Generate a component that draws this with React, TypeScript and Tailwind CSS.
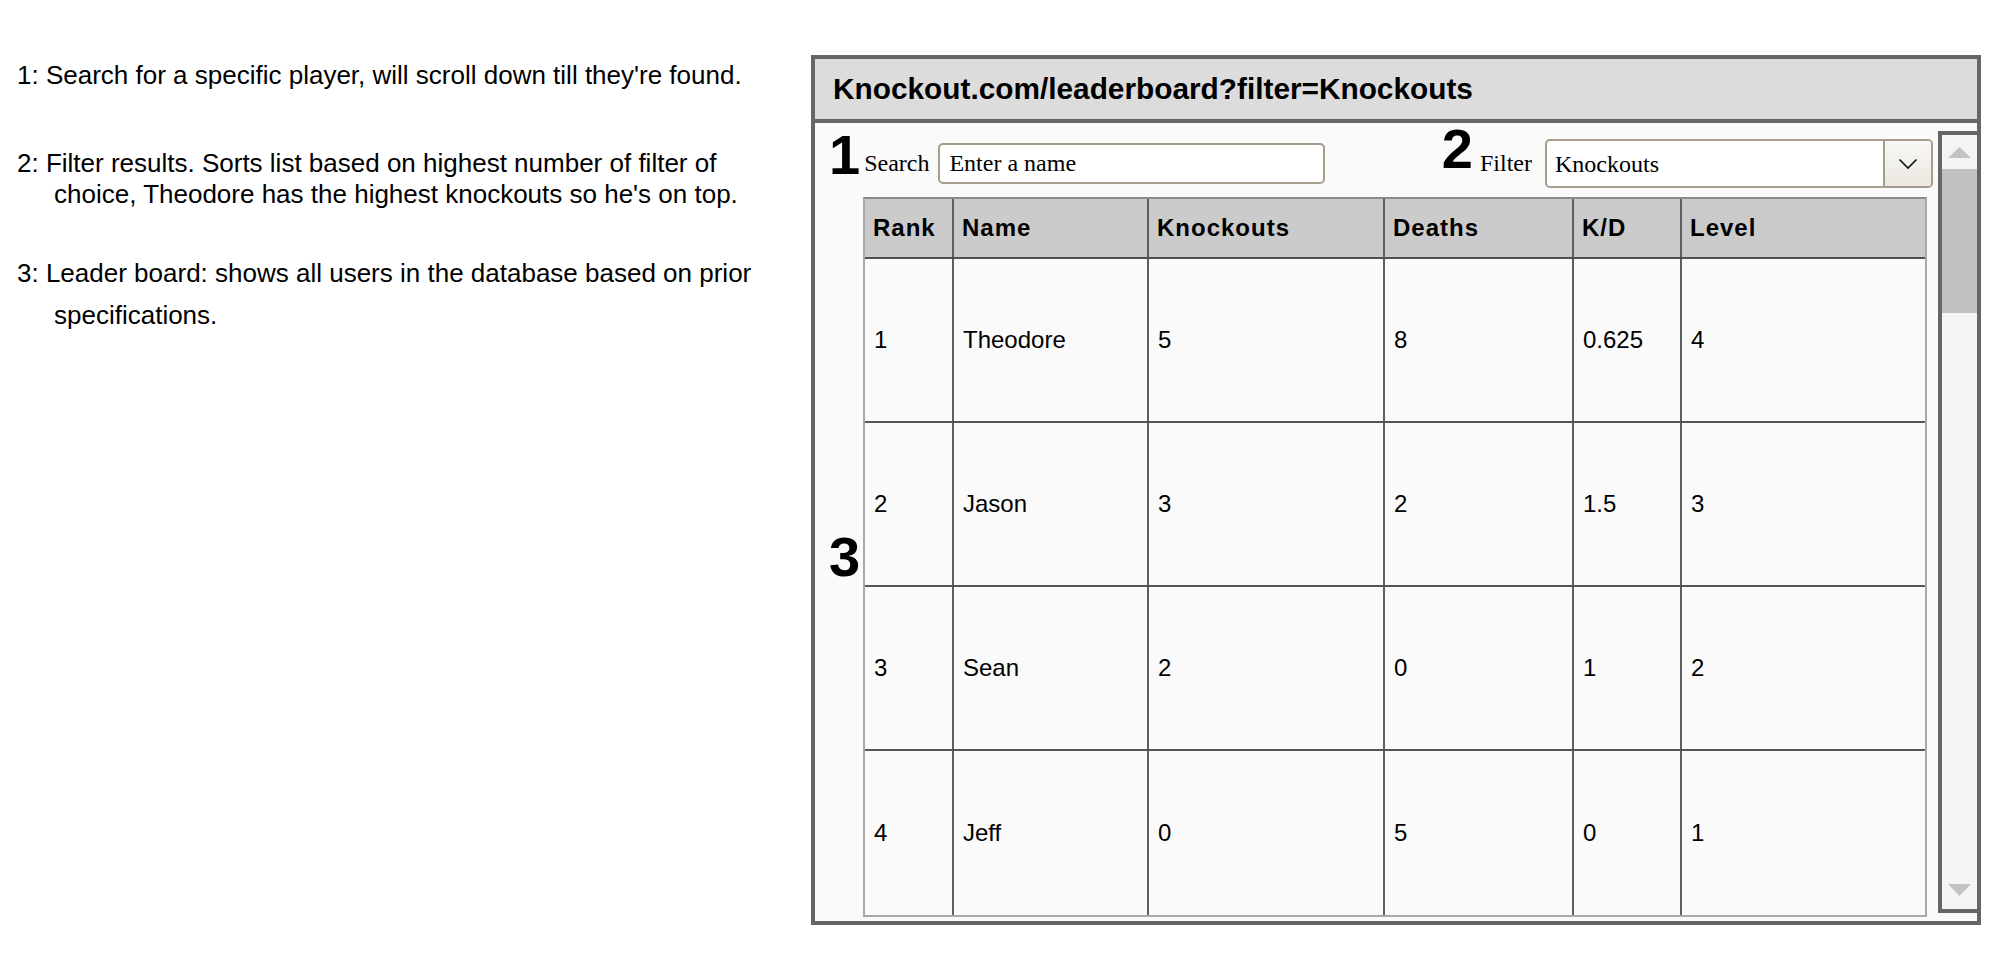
interface Player {
  rank: number;
  name: string;
  knockouts: number;
  deaths: number;
  kd: string;
  level: number;
}

const players: Player[] = [
  { rank: 1, name: 'Theodore', knockouts: 5, deaths: 8, kd: '0.625', level: 4 },
  { rank: 2, name: 'Jason', knockouts: 3, deaths: 2, kd: '1.5', level: 3 },
  { rank: 3, name: 'Sean', knockouts: 2, deaths: 0, kd: '1', level: 2 },
  { rank: 4, name: 'Jeff', knockouts: 0, deaths: 5, kd: '0', level: 1 },
];

const columns = ['Rank', 'Name', 'Knockouts', 'Deaths', 'K/D', 'Level'];
const widths = ['w-[87px]', 'w-[195px]', 'w-[236px]', 'w-[189px]', 'w-[108px]', 'w-[245px]'];

function Notes() {
  return (
    <div className="w-[811px] shrink-0 pl-[17px] pt-[60px] text-[26px] text-black font-['Liberation_Sans',Arial,sans-serif]">
      <p className="leading-[30px]">1: Search for a specific player, will scroll down till they're found.</p>
      <div className="mt-[58px] leading-[31px]">
        <p>2: Filter results. Sorts list based on highest number of filter of</p>
        <p className="pl-[37px]">choice, Theodore has the highest knockouts so he's on top.</p>
      </div>
      <div className="mt-[42px] leading-[42px]">
        <p>3: Leader board: shows all users in the database based on prior</p>
        <p className="pl-[37px]">specifications.</p>
      </div>
    </div>
  );
}

function Scrollbar() {
  return (
    <div className="w-[39px] shrink-0 mt-[8px] mb-[8px] border-l-4 border-t-4 border-b-4 border-[#666] bg-[#f4f4f4] flex flex-col">
      <div className="h-[34px] flex items-center justify-center">
        <svg width="23" height="11" viewBox="0 0 23 11">
          <polygon points="11.5,0 23,11 0,11" fill="#c3c3c3" />
        </svg>
      </div>
      <div className="h-[144px] bg-[#c1c1c1]" />
      <div className="flex-1" />
      <div className="h-[28px] flex items-start justify-center pt-[3px]">
        <svg width="23" height="12" viewBox="0 0 23 12">
          <polygon points="0,0 23,0 11.5,12" fill="#c3c3c3" />
        </svg>
      </div>
    </div>
  );
}

function Leaderboard() {
  return (
    <div className="w-[1064px] border-2 border-[#a8a8a8] border-t-[#8a8a8a] bg-[#fafafa] font-['Liberation_Sans',Arial,sans-serif] text-black">
      <div className="flex h-[60px] bg-[#cbcbcb] border-b-2 border-[#4f4f4f]">
        {columns.map((c, i) => (
          <div
            key={c}
            className={`${widths[i]} shrink-0 flex items-center pl-[8px] text-[24px] font-bold tracking-[1px] ${i > 0 ? 'border-l-2 border-[#5f5f5f]' : ''}`}
          >
            {c}
          </div>
        ))}
      </div>
      {players.map((p, r) => {
        const cells = [p.rank, p.name, p.knockouts, p.deaths, p.kd, p.level];
        return (
          <div key={p.rank} className={`flex h-[164px] ${r < players.length - 1 ? 'border-b-2 border-[#555]' : ''}`}>
            {cells.map((v, i) => (
              <div
                key={i}
                className={`${widths[i]} shrink-0 flex items-center pl-[9px] text-[24px] ${i > 0 ? 'border-l-2 border-[#5f5f5f]' : ''}`}
              >
                {v}
              </div>
            ))}
          </div>
        );
      })}
    </div>
  );
}

export default function App() {
  return (
    <div className="w-[2002px] h-[976px] bg-white flex">
      <Notes />
      <div className="mt-[55px] w-[1170px] h-[870px] border-4 border-[#666] bg-[#fafafa] flex flex-col">
        <div className="h-[64px] shrink-0 bg-[#dcdcdc] border-b-4 border-[#666] flex items-center pl-[18px]">
          <span className="text-[29.8px] font-bold text-black font-['Liberation_Sans',Arial,sans-serif]">
            Knockout.com/leaderboard?filter=Knockouts
          </span>
        </div>
        <div className="flex flex-1 min-h-0">
          <div className="flex-1 flex flex-col">
            <div className="h-[74px] shrink-0 flex items-start justify-between pl-[14px] pr-[5px] font-['Liberation_Serif','Times_New_Roman',serif] text-black">
              <div className="flex items-start">
                <span className="mt-[4px] text-[56px] leading-none font-bold font-['Liberation_Sans',Arial,sans-serif]">1</span>
                <span className="mt-[28px] ml-[4px] text-[24px] leading-none">Search</span>
                <input
                  className="mt-[20px] ml-[9px] w-[387px] h-[41px] px-[9px] rounded-[5px] border-2 border-[#a69d8d] bg-white text-[24px] text-black placeholder:text-black outline-none"
                  placeholder="Enter a name"
                />
              </div>
              <div className="flex items-start">
                <span className="-mt-[2px] text-[56px] leading-none font-bold font-['Liberation_Sans',Arial,sans-serif]">2</span>
                <span className="mt-[28px] ml-[7px] text-[24px] leading-none">Filter</span>
                <div className="mt-[16px] ml-[13px] w-[388px] h-[49px] rounded-[5px] border-2 border-[#a69d8d] bg-white flex overflow-hidden">
                  <div className="flex-1 flex items-center pl-[8px] text-[24px]">Knockouts</div>
                  <div className="w-[48px] border-l-2 border-[#a69d8d] bg-gradient-to-b from-[#f8f7f3] to-[#ebe8e1] flex items-center justify-center">
                    <svg width="20" height="12" viewBox="0 0 20 12">
                      <polyline points="1.5,1.5 10,10 18.5,1.5" fill="none" stroke="#111" strokeWidth="1.6" />
                    </svg>
                  </div>
                </div>
              </div>
            </div>
            <div className="flex">
              <div className="w-[48px] shrink-0 flex items-center pl-[14px]">
                <span className="text-[56px] leading-none font-bold font-['Liberation_Sans',Arial,sans-serif]">3</span>
              </div>
              <Leaderboard />
            </div>
          </div>
          <Scrollbar />
        </div>
      </div>
    </div>
  );
}
